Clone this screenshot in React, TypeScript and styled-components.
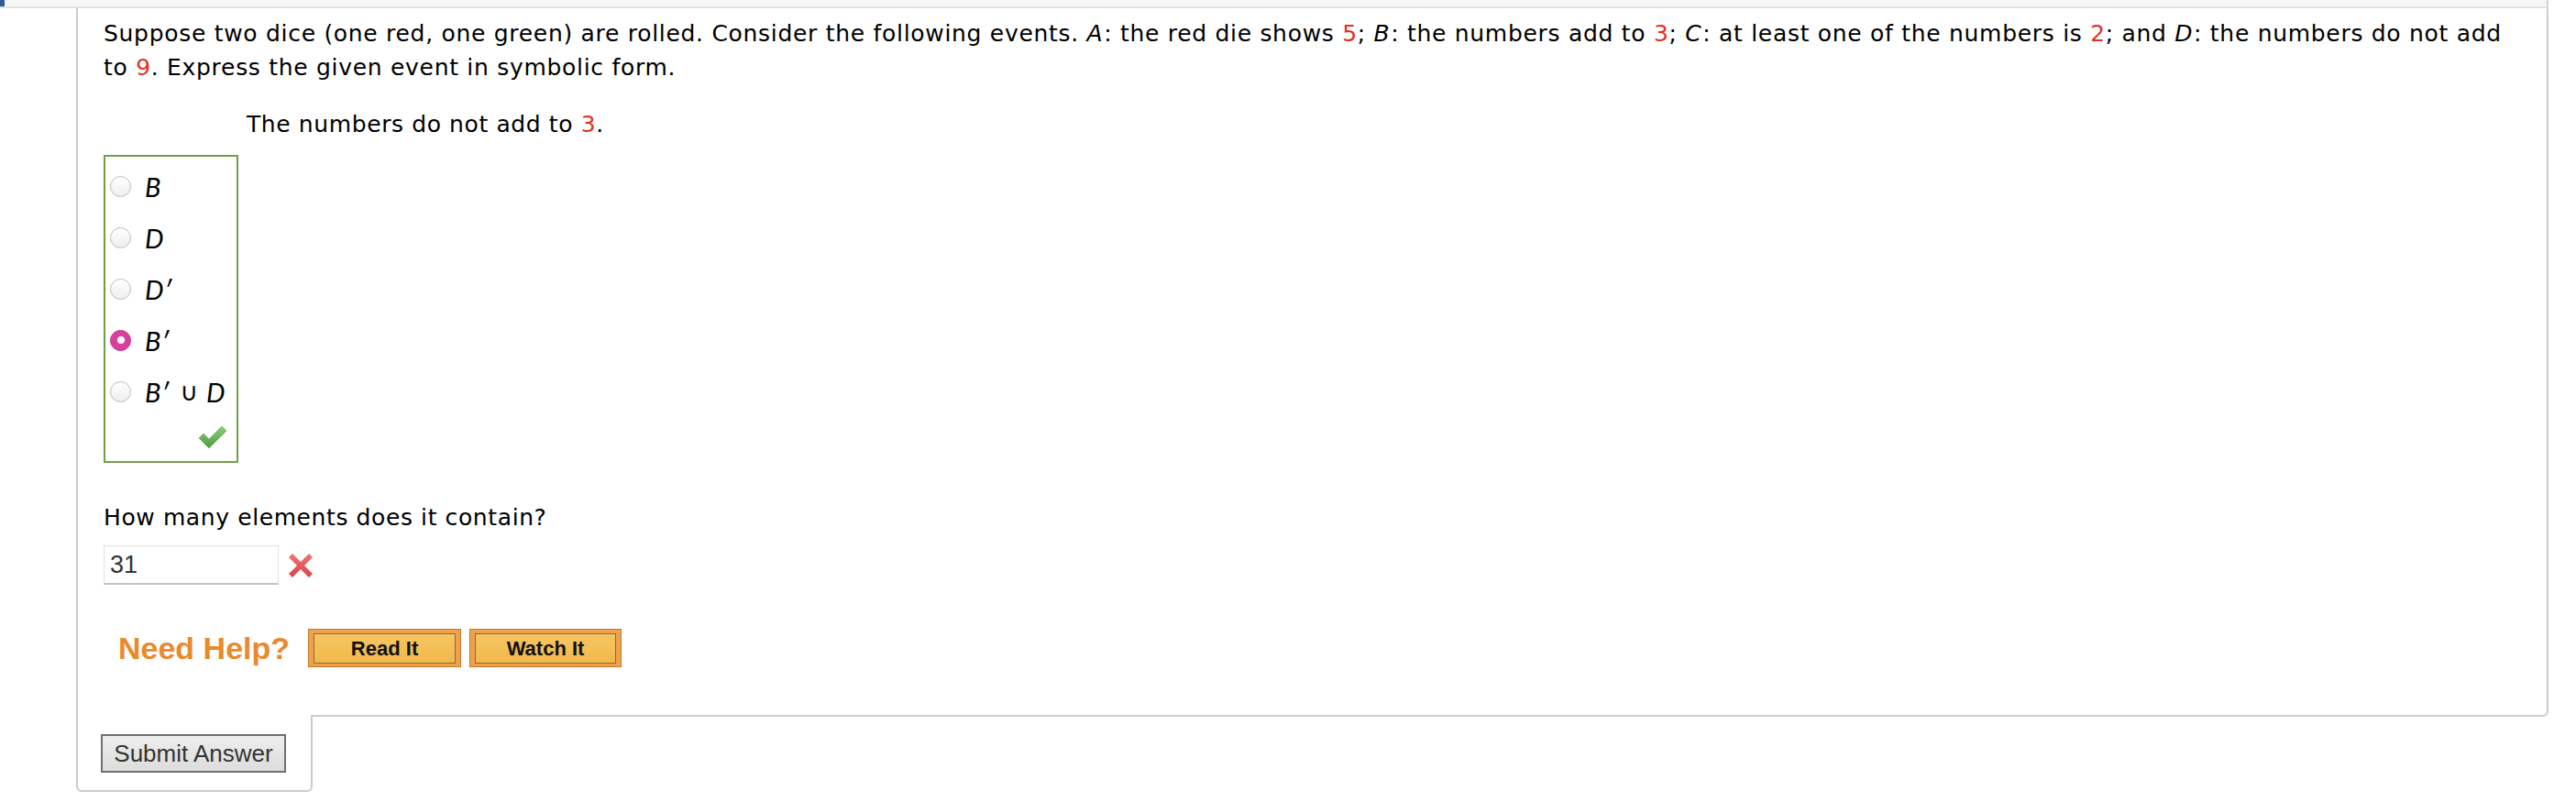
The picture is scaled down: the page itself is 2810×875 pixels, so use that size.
import React from "react";
import styled, { createGlobalStyle } from "styled-components";

const GlobalStyle = createGlobalStyle`
  html, body {
    margin: 0;
    padding: 0;
    background: #ffffff;
  }
  body {
    font-family: "DejaVu Sans", Verdana, sans-serif;
    color: #000;
  }
`;

const Page = styled.div`
  width: 2780px;
`;

const TopBar = styled.div`
  height: 7px;
  background: #f6f6f6;
  border-bottom: 2px solid #e1e1e1;
  border-right: 2px solid #d4d4d4;
  display: flex;
`;

const Accent = styled.div`
  width: 5px;
  height: 7px;
  background: #2c5d99;
`;

const Panel = styled.div`
  margin-left: 83px;
  border-left: 2px solid #cccccc;
  border-right: 2px solid #cccccc;
  border-bottom: 2px solid #cccccc;
  border-bottom-right-radius: 6px;
  padding: 9px 28px 52px 28px;
`;

const Text = styled.p`
  margin: 0;
  font-size: 25px;
  letter-spacing: 0.7px;
  line-height: 37px;
`;

const Question = styled(Text)``;

const Num = styled.span`
  color: #e5301f;
`;

const Var = styled.i`
  font-style: italic;
  letter-spacing: 1.5px;
`;

const EventLine = styled(Text)`
  margin: 25px 0 0 156px;
  letter-spacing: 0.6px;
`;

const ChoiceBox = styled.div`
  margin-top: 15px;
  width: 143px;
  border: 2px solid #6fa046;
  padding: 4px 0 0 0;
  display: flex;
  flex-direction: column;
`;

const ChoiceRow = styled.label`
  height: 56px;
  display: flex;
  align-items: center;
  gap: 15px;
  padding-left: 5px;
`;

const Radio = styled.span<{ $checked?: boolean }>`
  width: 23px;
  height: 23px;
  border-radius: 50%;
  box-sizing: border-box;
  flex: none;
  display: flex;
  align-items: center;
  justify-content: center;
  ${(p) =>
    p.$checked
      ? `background: #d9409b; border: 1px solid #c8358b;`
      : `background: linear-gradient(#ffffff, #eeeeee); border: 1px solid #bdbdbd;`}
`;

const RadioDot = styled.span`
  width: 8px;
  height: 8px;
  border-radius: 50%;
  background: #ffffff;
`;

const MathLabel = styled.span`
  font-family: Lato, "Open Sans", sans-serif;
  font-style: italic;
  font-size: 29px;
  color: #000;
  white-space: nowrap;
  display: flex;
  align-items: center;
`;

const Upright = styled.span`
  font-style: normal;
  font-family: "DejaVu Sans", sans-serif;
  font-size: 27px;
  margin: 0 9px 0 12px;
`;

const CheckRow = styled.div`
  height: 48px;
  display: flex;
  justify-content: flex-end;
  align-items: center;
  padding-right: 10px;
  padding-bottom: 4px;
  box-sizing: border-box;
`;

const Prompt = styled(Text)`
  margin-top: 42px;
  line-height: 36px;
  letter-spacing: 0.6px;
`;

const AnswerRow = styled.div`
  margin-top: 12px;
  display: flex;
  align-items: center;
  gap: 10px;
`;

const AnswerInput = styled.div`
  width: 191px;
  height: 43px;
  box-sizing: border-box;
  border: 1px solid #e2e2e2;
  border-bottom: 2px solid #c4c4c4;
  background: #fff;
  padding-left: 6px;
  display: flex;
  align-items: center;
  font-family: "Liberation Sans", Arial, sans-serif;
  font-size: 27px;
  color: #333;
`;

const HelpRow = styled.div`
  margin-top: 48px;
  padding-left: 16px;
  display: flex;
  align-items: center;
`;

const NeedHelp = styled.span`
  font-family: "Liberation Sans", Arial, sans-serif;
  font-weight: bold;
  font-size: 34px;
  color: #e98a2d;
  margin-right: 20px;
`;

const HelpButton = styled.div<{ $w: number }>`
  width: ${(p) => p.$w}px;
  height: 42px;
  box-sizing: border-box;
  background: #eda14c;
  border: 1px solid #c47a2c;
  padding: 4px 5px 3px 5px;
  margin-right: 9px;
  display: flex;
`;

const HelpButtonInner = styled.span`
  flex: 1;
  border: 1px solid #8c6a3c;
  background: linear-gradient(#f6c561, #f1b84b);
  display: flex;
  align-items: center;
  justify-content: center;
  font-family: "Liberation Sans", Arial, sans-serif;
  font-weight: bold;
  font-size: 22px;
  color: #111;
`;

const Tab = styled.div`
  margin-left: 83px;
  margin-top: -2px;
  width: 258px;
  height: 84px;
  box-sizing: border-box;
  border: 2px solid #cccccc;
  border-top: none;
  border-radius: 0 0 6px 6px;
  background: #fff;
  position: relative;
  padding: 21px 0 0 25px;
`;

const SubmitButton = styled.button`
  width: 202px;
  height: 42px;
  box-sizing: border-box;
  border: 2px solid #707070;
  background: linear-gradient(#eeeeee, #dcdcdc);
  font-family: "Liberation Sans", Arial, sans-serif;
  font-size: 26px;
  color: #333;
  padding: 0;
  border-radius: 0;
`;

const CheckIcon = () => (
  <svg width="32" height="26" viewBox="0 0 32 26">
    <defs>
      <linearGradient id="chk" x1="0" y1="0" x2="0" y2="1">
        <stop offset="0" stopColor="#8fd07a" />
        <stop offset="1" stopColor="#4c9a3e" />
      </linearGradient>
    </defs>
    <path
      d="M1 14 L6 9 L12 15 L26 1 L31 6 L12 25 Z"
      fill="url(#chk)"
      stroke="#5aa64a"
      strokeWidth="0.6"
      strokeLinejoin="round"
    />
  </svg>
);

const CrossIcon = () => (
  <svg width="28" height="28" viewBox="0 0 28 28">
    <defs>
      <linearGradient id="crs" x1="0" y1="0" x2="0" y2="1">
        <stop offset="0" stopColor="#f07474" />
        <stop offset="1" stopColor="#d94444" />
      </linearGradient>
    </defs>
    <path
      d="M5 1 L14 10 L23 1 L27 5 L18 14 L27 23 L23 27 L14 18 L5 27 L1 23 L10 14 L1 5 Z"
      fill="url(#crs)"
      strokeLinejoin="round"
    />
  </svg>
);

const choices: { label: React.ReactNode; checked?: boolean }[] = [
  { label: "B" },
  { label: "D" },
  { label: "D\u2032" },
  { label: "B\u2032", checked: true },
  {
    label: (
      <>
        B{"\u2032"}
        <Upright>{"\u222A"}</Upright>D
      </>
    ),
  },
];

export default function App() {
  return (
    <Page>
      <GlobalStyle />
      <TopBar>
        <Accent />
      </TopBar>
      <Panel>
        <Question>
          Suppose two dice (one red, one green) are rolled. Consider the following events.{" "}
          <Var>A</Var>: the red die shows <Num>5</Num>; <Var>B</Var>: the numbers add to{" "}
          <Num>3</Num>; <Var>C</Var>: at least one of the numbers is <Num>2</Num>; and{" "}
          <Var>D</Var>: the numbers do not add to <Num>9</Num>. Express the given event in
          symbolic form.
        </Question>
        <EventLine>
          The numbers do not add to <Num>3</Num>.
        </EventLine>
        <ChoiceBox>
          {choices.map((c, i) => (
            <ChoiceRow key={i}>
              <Radio $checked={c.checked}>{c.checked && <RadioDot />}</Radio>
              <MathLabel>{c.label}</MathLabel>
            </ChoiceRow>
          ))}
          <CheckRow>
            <CheckIcon />
          </CheckRow>
        </ChoiceBox>
        <Prompt>How many elements does it contain?</Prompt>
        <AnswerRow>
          <AnswerInput>31</AnswerInput>
          <CrossIcon />
        </AnswerRow>
        <HelpRow>
          <NeedHelp>Need Help?</NeedHelp>
          <HelpButton $w={167}>
            <HelpButtonInner>Read It</HelpButtonInner>
          </HelpButton>
          <HelpButton $w={166}>
            <HelpButtonInner>Watch It</HelpButtonInner>
          </HelpButton>
        </HelpRow>
      </Panel>
      <Tab>
        <SubmitButton>Submit Answer</SubmitButton>
      </Tab>
    </Page>
  );
}
